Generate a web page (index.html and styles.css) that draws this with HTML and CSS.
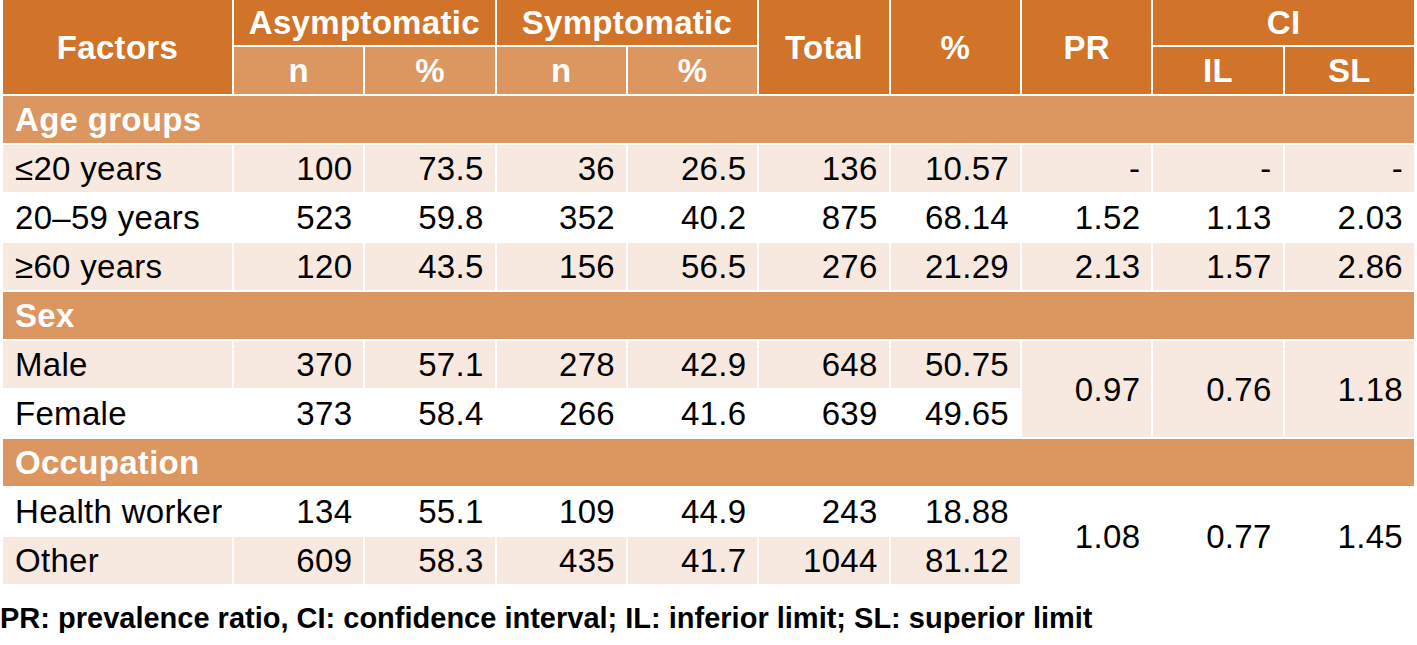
FILE: index.html
```html
<!DOCTYPE html>
<html>
<head>
<meta charset="utf-8">
<link rel="stylesheet" href="styles.css">
</head>
<body>
<table class="data">
  <colgroup>
    <col class="c-factor">
    <col><col><col><col><col><col><col><col><col>
  </colgroup>
  <thead>
    <tr class="h1">
      <th rowspan="2" class="dark">Factors</th>
      <th colspan="2" class="dark">Asymptomatic</th>
      <th colspan="2" class="dark">Symptomatic</th>
      <th rowspan="2" class="dark">Total</th>
      <th rowspan="2" class="dark">%</th>
      <th rowspan="2" class="dark">PR</th>
      <th colspan="2" class="dark">CI</th>
    </tr>
    <tr class="h2">
      <th class="mid">n</th>
      <th class="mid">%</th>
      <th class="mid">n</th>
      <th class="mid">%</th>
      <th class="dark">IL</th>
      <th class="dark">SL</th>
    </tr>
  </thead>
  <tbody>
    <tr class="section"><td colspan="10">Age groups</td></tr>
    <tr class="light">
      <td class="lbl">≤20 years</td><td>100</td><td>73.5</td><td>36</td><td>26.5</td><td>136</td><td>10.57</td><td>-</td><td>-</td><td>-</td>
    </tr>
    <tr class="plain">
      <td class="lbl">20–59 years</td><td>523</td><td>59.8</td><td>352</td><td>40.2</td><td>875</td><td>68.14</td><td>1.52</td><td>1.13</td><td>2.03</td>
    </tr>
    <tr class="light">
      <td class="lbl">≥60 years</td><td>120</td><td>43.5</td><td>156</td><td>56.5</td><td>276</td><td>21.29</td><td>2.13</td><td>1.57</td><td>2.86</td>
    </tr>
    <tr class="section"><td colspan="10">Sex</td></tr>
    <tr class="light">
      <td class="lbl">Male</td><td>370</td><td>57.1</td><td>278</td><td>42.9</td><td>648</td><td>50.75</td><td rowspan="2" class="lightcell">0.97</td><td rowspan="2" class="lightcell">0.76</td><td rowspan="2" class="lightcell">1.18</td>
    </tr>
    <tr class="plain">
      <td class="lbl">Female</td><td>373</td><td>58.4</td><td>266</td><td>41.6</td><td>639</td><td>49.65</td>
    </tr>
    <tr class="section"><td colspan="10">Occupation</td></tr>
    <tr class="plain">
      <td class="lbl">Health worker</td><td>134</td><td>55.1</td><td>109</td><td>44.9</td><td>243</td><td>18.88</td><td rowspan="2">1.08</td><td rowspan="2">0.77</td><td rowspan="2">1.45</td>
    </tr>
    <tr class="light">
      <td class="lbl">Other</td><td>609</td><td>58.3</td><td>435</td><td>41.7</td><td>1044</td><td>81.12</td>
    </tr>
  </tbody>
</table>
<p class="note">PR: prevalence ratio, CI: confidence interval; IL: inferior limit; SL: superior limit</p>
</body>
</html>
```

FILE: styles.css
```css
html, body {
  margin: 0;
  padding: 0;
  background: #ffffff;
}

body {
  font-family: "Liberation Sans", Arial, sans-serif;
  color: #000000;
}

.data {
  border-collapse: separate;
  border-spacing: 2px;
  table-layout: fixed;
  width: 1415px;
  margin: -2px 0 0 1px;
  font-size: 33px;
  letter-spacing: 0.3px;
  line-height: 1;
}

.c-factor {
  width: 229px;
}

.data th,
.data td {
  padding: 0 12px;
  vertical-align: middle;
  white-space: nowrap;
  overflow: hidden;
}

.data th {
  color: #ffffff;
  font-weight: bold;
  text-align: center;
}

.h1 th {
  height: 45px;
}

.h2 th {
  height: 47px;
}

.dark {
  background: #d17328;
}

.mid {
  background: #dc9660;
}

.data tbody td {
  height: 47px;
  text-align: right;
  padding-right: 11px;
}

.data tbody td.lbl {
  text-align: left;
  padding-left: 12px;
}

.section td {
  background: #dc9660;
  color: #ffffff;
  font-weight: bold;
  text-align: left !important;
  padding-left: 12px;
}

.light td {
  background: #f7e9df;
}

.plain td {
  background: #ffffff;
}

.data td.lightcell {
  background: #f7e9df;
}

.note {
  margin: 18px 0 0 0;
  font-size: 29px;
  font-weight: bold;
  line-height: 1;
}
```
